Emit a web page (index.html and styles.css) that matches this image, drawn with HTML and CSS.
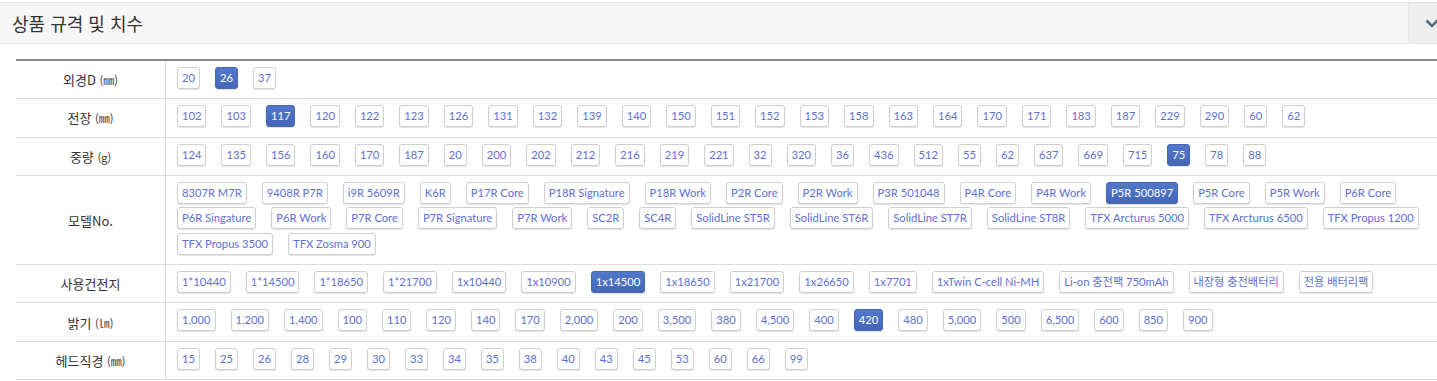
FILE: index.html
```html
<!DOCTYPE html>
<html lang="ko">
<head>
<meta charset="utf-8">
<title>상품 규격 및 치수</title>
<link rel="stylesheet" href="styles.css">
</head>
<body>
<section class="spec">
  <div class="spec-head">
    <h2 class="spec-title">상품 규격 및 치수</h2>
    <button class="spec-toggle" type="button" aria-label="접기">
      <svg width="14" height="9" viewBox="0 0 14 9"><polyline points="1.5,1.5 7,7 12.5,1.5" fill="none" stroke="#5b6b7b" stroke-width="2.6"/></svg>
    </button>
  </div>
  <table class="spec-table">
    <tr>
      <th>외경D <span class="unit">(㎜)</span></th>
      <td><ul class="chips">
        <li class="chip">20</li><li class="chip on">26</li><li class="chip">37</li>
      </ul></td>
    </tr>
    <tr>
      <th>전장 <span class="unit">(㎜)</span></th>
      <td><ul class="chips">
        <li class="chip">102</li><li class="chip">103</li><li class="chip on">117</li><li class="chip">120</li><li class="chip">122</li><li class="chip">123</li><li class="chip">126</li><li class="chip">131</li><li class="chip">132</li><li class="chip">139</li><li class="chip">140</li><li class="chip">150</li><li class="chip">151</li><li class="chip">152</li><li class="chip">153</li><li class="chip">158</li><li class="chip">163</li><li class="chip">164</li><li class="chip">170</li><li class="chip">171</li><li class="chip">183</li><li class="chip">187</li><li class="chip">229</li><li class="chip">290</li><li class="chip">60</li><li class="chip">62</li>
      </ul></td>
    </tr>
    <tr>
      <th>중량 <span class="unit">(g)</span></th>
      <td><ul class="chips">
        <li class="chip">124</li><li class="chip">135</li><li class="chip">156</li><li class="chip">160</li><li class="chip">170</li><li class="chip">187</li><li class="chip">20</li><li class="chip">200</li><li class="chip">202</li><li class="chip">212</li><li class="chip">216</li><li class="chip">219</li><li class="chip">221</li><li class="chip">32</li><li class="chip">320</li><li class="chip">36</li><li class="chip">436</li><li class="chip">512</li><li class="chip">55</li><li class="chip">62</li><li class="chip">637</li><li class="chip">669</li><li class="chip">715</li><li class="chip on">75</li><li class="chip">78</li><li class="chip">88</li>
      </ul></td>
    </tr>
    <tr>
      <th>모델No.</th>
      <td><ul class="chips">
        <li class="chip">8307R M7R</li><li class="chip">9408R P7R</li><li class="chip">i9R 5609R</li><li class="chip">K6R</li><li class="chip">P17R Core</li><li class="chip">P18R Signature</li><li class="chip">P18R Work</li><li class="chip">P2R Core</li><li class="chip">P2R Work</li><li class="chip">P3R 501048</li><li class="chip">P4R Core</li><li class="chip">P4R Work</li><li class="chip on">P5R 500897</li><li class="chip">P5R Core</li><li class="chip">P5R Work</li><li class="chip">P6R Core</li><li class="chip">P6R Singature</li><li class="chip">P6R Work</li><li class="chip">P7R Core</li><li class="chip">P7R Signature</li><li class="chip">P7R Work</li><li class="chip">SC2R</li><li class="chip">SC4R</li><li class="chip">SolidLine ST5R</li><li class="chip">SolidLine ST6R</li><li class="chip">SolidLine ST7R</li><li class="chip">SolidLine ST8R</li><li class="chip">TFX Arcturus 5000</li><li class="chip">TFX Arcturus 6500</li><li class="chip">TFX Propus 1200</li><li class="chip">TFX Propus 3500</li><li class="chip">TFX Zosma 900</li>
      </ul></td>
    </tr>
    <tr>
      <th>사용건전지</th>
      <td><ul class="chips">
        <li class="chip">1*10440</li><li class="chip">1*14500</li><li class="chip">1*18650</li><li class="chip">1*21700</li><li class="chip">1x10440</li><li class="chip">1x10900</li><li class="chip on">1x14500</li><li class="chip">1x18650</li><li class="chip">1x21700</li><li class="chip">1x26650</li><li class="chip">1x7701</li><li class="chip">1xTwin C-cell Ni-MH</li><li class="chip">Li-on 충전팩 750mAh</li><li class="chip">내장형 충전배터리</li><li class="chip">전용 배터리팩</li>
      </ul></td>
    </tr>
    <tr>
      <th>밝기 <span class="unit">(㏐)</span></th>
      <td><ul class="chips">
        <li class="chip">1,000</li><li class="chip">1,200</li><li class="chip">1,400</li><li class="chip">100</li><li class="chip">110</li><li class="chip">120</li><li class="chip">140</li><li class="chip">170</li><li class="chip">2,000</li><li class="chip">200</li><li class="chip">3,500</li><li class="chip">380</li><li class="chip">4,500</li><li class="chip">400</li><li class="chip on">420</li><li class="chip">480</li><li class="chip">5,000</li><li class="chip">500</li><li class="chip">6,500</li><li class="chip">600</li><li class="chip">850</li><li class="chip">900</li>
      </ul></td>
    </tr>
    <tr>
      <th>헤드직경 <span class="unit">(㎜)</span></th>
      <td><ul class="chips">
        <li class="chip">15</li><li class="chip">25</li><li class="chip">26</li><li class="chip">28</li><li class="chip">29</li><li class="chip">30</li><li class="chip">33</li><li class="chip">34</li><li class="chip">35</li><li class="chip">38</li><li class="chip">40</li><li class="chip">43</li><li class="chip">45</li><li class="chip">53</li><li class="chip">60</li><li class="chip">66</li><li class="chip">99</li>
      </ul></td>
    </tr>
  </table>
</section>
</body>
</html>
```
FILE: styles.css
```css
html, body {
  margin: 0;
  padding: 0;
  overflow: hidden;
  background: #fff;
}
body {
  font-family: "Noto Sans CJK KR", "Noto Sans", sans-serif;
  color: #333;
}
.spec {
  width: 1454px;
  padding-top: 2px;
}
.spec-head {
  display: flex;
  height: 40px;
  background: #f7f7f7;
  border-top: 1px solid #e6e6e6;
  border-bottom: 1px solid #e6e6e6;
}
.spec-title {
  flex: 1;
  margin: 0;
  padding-left: 12px;
  font-size: 18px;
  font-weight: 400;
  line-height: 40px;
  color: #333;
}
.spec-toggle {
  width: 46px;
  border: 0;
  border-left: 1px solid #e8e8e8;
  background: #efefef;
  padding: 0;
  display: flex;
  align-items: center;
  justify-content: center;
}
.spec-table {
  margin: 15px 0 0 16px;
  width: calc(100% - 16px);
  border-collapse: collapse;
  border-top: 2px solid #8a8a8a;
}
.spec-table th {
  width: 149px;
  font-size: 13px;
  font-weight: 400;
  color: #333;
  text-align: center;
  vertical-align: middle;
  border-right: 1px solid #dddddd;
  border-bottom: 1px solid #dddddd;
  padding: 0;
}
.unit {
  font-size: 11px;
}
.spec-table td {
  padding: 6px 11px 9.3px;
  border-bottom: 1px solid #dddddd;
  vertical-align: middle;
}
.chips {
  list-style: none;
  margin: 0;
  padding: 0;
  display: flex;
  flex-wrap: wrap;
  column-gap: 15px;
  row-gap: 3.5px;
}
.chip {
  box-sizing: border-box;
  height: 22px;
  padding: 0 4px;
  border: 1px solid #cfcfcf;
  border-radius: 3px;
  box-shadow: 0 1px 1px rgba(0, 0, 0, 0.12);
  background: #fff;
  color: #5d70d6;
  font-family: "Lato", "Noto Sans CJK KR", sans-serif;
  font-size: 11.2px;
  line-height: 20px;
  white-space: nowrap;
}
.chip.on {
  background: linear-gradient(#5278cb, #4466b8);
  border-color: #4867b3;
  color: #fff;
}
```
